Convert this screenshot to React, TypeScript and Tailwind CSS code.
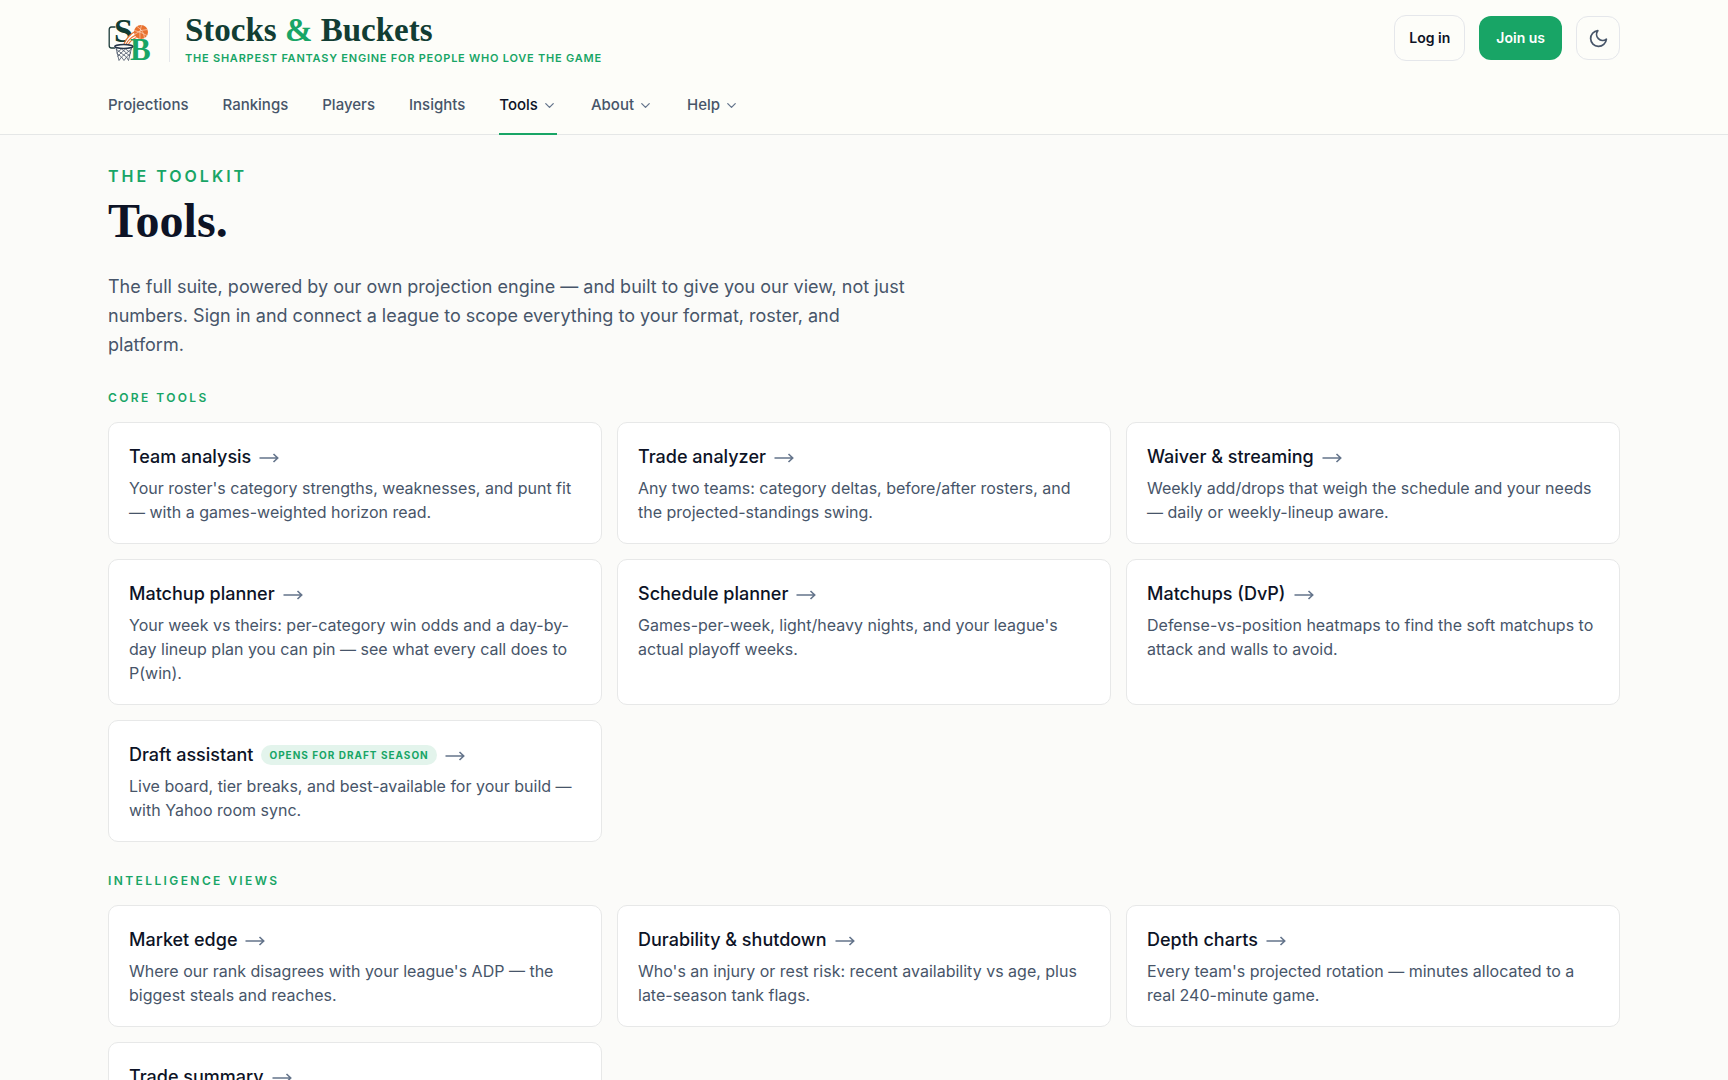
import { ChevronDown } from 'lucide-react';

interface Tool {
  title: string;
  description: string;
  badge?: string;
}

interface NavItem {
  label: string;
  active?: boolean;
  hasMenu?: boolean;
}

const navItems: NavItem[] = [
  { label: 'Projections' },
  { label: 'Rankings' },
  { label: 'Players' },
  { label: 'Insights' },
  { label: 'Tools', active: true, hasMenu: true },
  { label: 'About', hasMenu: true },
  { label: 'Help', hasMenu: true },
];

const coreTools: Tool[] = [
  {
    title: 'Team analysis',
    description: "Your roster's category strengths, weaknesses, and punt fit — with a games-weighted horizon read.",
  },
  {
    title: 'Trade analyzer',
    description: 'Any two teams: category deltas, before/after rosters, and the projected-standings swing.',
  },
  {
    title: 'Waiver & streaming',
    description: 'Weekly add/drops that weigh the schedule and your needs — daily or weekly-lineup aware.',
  },
  {
    title: 'Matchup planner',
    description:
      'Your week vs theirs: per-category win odds and a day-by-day lineup plan you can pin — see what every call does to P(win).',
  },
  {
    title: 'Schedule planner',
    description: "Games-per-week, light/heavy nights, and your league's actual playoff weeks.",
  },
  {
    title: 'Matchups (DvP)',
    description: 'Defense-vs-position heatmaps to find the soft matchups to attack and walls to avoid.',
  },
  {
    title: 'Draft assistant',
    badge: 'Opens for draft season',
    description: 'Live board, tier breaks, and best-available for your build — with Yahoo room sync.',
  },
];

const intelligenceViews: Tool[] = [
  {
    title: 'Market edge',
    description: "Where our rank disagrees with your league's ADP — the biggest steals and reaches.",
  },
  {
    title: 'Durability & shutdown',
    description: "Who's an injury or rest risk: recent availability vs age, plus late-season tank flags.",
  },
  {
    title: 'Depth charts',
    description: "Every team's projected rotation — minutes allocated to a real 240-minute game.",
  },
  {
    title: 'Trade summary',
    description: 'Every completed trade in your league, graded by value gained and given up.',
  },
];

function Logo() {
  return (
    <svg viewBox="0 0 44 44" className="size-11 shrink-0 overflow-visible" aria-hidden="true">
      {/* Backboard */}
      <path d="M7.5 9H3.5Q1.2 9 1.2 11.5V27.5Q1.2 30 3.5 30H7" fill="none" stroke="#1c3b3a" strokeWidth="1.3" />
      <text x="6" y="23.5" fontSize="34" fontWeight="700" fill="#123d33" className="font-['Liberation_Serif',serif]">
        S
      </text>
      {/* Ball and trail */}
      <path d="M16 27Q19 19 27 13L30 19Q23 20 19 27Z" fill="#fdfdf9" />
      <path
        d="M16 26Q19 18 27 13.5M18 26.5Q21 20 28 17M20 27Q23 21.5 28.5 19.5"
        fill="none"
        stroke="#e8712f"
        strokeWidth="1.1"
      />
      <circle cx="33" cy="14" r="7" fill="#e8712f" />
      <path
        d="M26.5 16.5Q33 11 39.5 11.5M29 8.5Q36 13 36.5 20M33.5 7.3Q31 14 32 20.8M26.5 12.5Q33 14 39 17.5"
        fill="none"
        stroke="#fde3d0"
        strokeWidth="0.6"
      />
      <text x="22" y="42" fontSize="31" fontWeight="700" fill="#18a566" className="font-['Liberation_Serif',serif]">
        B
      </text>
      {/* Hoop and net */}
      <path d="M6.5 29L10.5 42.5H20.5L25 29Z" fill="#fdfdf9" />
      <path
        d="M8 30L11 42.5L13.5 39L16 42.5L18.5 39L20.5 42.5L23.5 30M8 31L13 35L17.5 31L23 35M23.5 31L18.5 35L13.5 31L8.5 35M9 35.5L13.5 39L18 35L22 38M22.5 35.5L18.5 39L13 35L9.5 38.5"
        fill="none"
        stroke="#4a5568"
        strokeWidth="0.8"
      />
      <ellipse cx="15.8" cy="28.5" rx="9" ry="1.9" fill="#fdfdf9" stroke="#27364a" strokeWidth="1.5" />
    </svg>
  );
}

function MoonIcon() {
  return (
    <svg
      viewBox="0 0 24 24"
      className="size-[21px]"
      fill="none"
      stroke="currentColor"
      strokeWidth="2"
      strokeLinecap="round"
      strokeLinejoin="round"
      aria-hidden="true"
    >
      <path d="M21 12.8A9 9 0 1 1 11.2 3 7 7 0 0 0 21 12.8Z" />
    </svg>
  );
}

function Header() {
  return (
    <header className="border-b border-[#e5e7e7] bg-[#fdfdf9]">
      <div className="mx-auto max-w-[1560px] px-6 pt-[15px]">
        <div className="flex items-start justify-between">
          <a href="#" className="flex items-center">
            <Logo />
            <span className="mr-[15px] ml-[17px] h-11 w-px bg-[#e5e7eb]" />
            <span className="flex flex-col">
              <span className="font-['Liberation_Serif',serif] text-[33px] leading-[30px] font-bold text-[#123d33]">
                Stocks <span className="text-[#18a566]">&amp;</span> Buckets
              </span>
              <span className="mt-[7px] text-[11px] leading-3 font-semibold tracking-[0.07em] text-[#18a566] uppercase">
                The sharpest fantasy engine for people who love the game
              </span>
            </span>
          </a>
          <div className="flex items-center gap-[14px]">
            <button className="h-[46px] rounded-xl border border-[#e5e7eb] px-[14px] text-sm font-semibold text-[#0d1326]">
              Log in
            </button>
            <button className="h-11 rounded-xl bg-[#18a566] px-[17px] text-sm font-semibold text-white">
              Join us
            </button>
            <button
              aria-label="Toggle dark mode"
              className="flex size-11 items-center justify-center rounded-xl border border-[#e5e7eb] text-[#475569]"
            >
              <MoonIcon />
            </button>
          </div>
        </div>

        <nav className="mt-[13px] flex gap-[34px]">
          {navItems.map((item) => (
            <a
              key={item.label}
              href="#"
              className={`-mb-px flex items-center gap-1 border-b-2 py-4 text-[15px] leading-6 font-medium ${
                item.active ? 'border-[#18a566] text-[#0d1326]' : 'border-transparent text-[#475569]'
              }`}
            >
              {item.label}
              {item.hasMenu && <ChevronDown size={15} className="text-[#64748b]" />}
            </a>
          ))}
        </nav>
      </div>
    </header>
  );
}

function ToolCard({ title, description, badge }: Tool) {
  return (
    <a href="#" className="block rounded-[10px] border border-[#e7e8e8] bg-white px-5 pt-5 pb-[19px]">
      <h3 className="flex items-center gap-2 text-lg leading-7 font-medium text-[#0d1326]">
        {title}
        {badge && (
          <span className="rounded-full bg-[#e3f4ec] px-2 text-[10px] leading-5 font-bold tracking-[0.1em] text-[#18a566] uppercase">
            {badge}
          </span>
        )}
        <svg viewBox="0 0 20 12" className="mt-[2px] h-3 w-5" fill="none" stroke="#64748b" strokeWidth="1.6" aria-hidden="true">
          <path d="M0.5 6H18.5M14.5 2L18.7 6L14.5 10" />
        </svg>
      </h3>
      <p className="mt-[5px] text-base leading-6 text-[#475569]">{description}</p>
    </a>
  );
}

function ToolSection({ heading, tools }: { heading: string; tools: Tool[] }) {
  return (
    <section className="mt-[29px]">
      <h2 className="text-xs leading-5 font-semibold tracking-[0.2em] text-[#18a566] uppercase">{heading}</h2>
      <div className="mt-[14px] grid gap-[15px] lg:grid-cols-3">
        {tools.map((tool) => (
          <ToolCard key={tool.title} {...tool} />
        ))}
      </div>
    </section>
  );
}

export default function App() {
  return (
    <div className="min-h-screen bg-[#fbfbf9] font-['Inter',sans-serif]">
      <Header />
      <main className="mx-auto max-w-[1560px] px-6 pt-[29px] pb-16">
        <p className="text-base leading-6 font-semibold tracking-[3px] text-[#18a566] uppercase">The toolkit</p>
        <h1 className="mt-2 font-['Liberation_Serif',serif] text-5xl leading-[50px] font-bold text-[#0d1326]">
          Tools.
        </h1>
        <p className="mt-[26px] max-w-[808px] text-lg leading-[29px] text-[#475569]">
          The full suite, powered by our own projection engine — and built to give you our view, not just numbers. Sign
          in and connect a league to scope everything to your format, roster, and platform.
        </p>
        <ToolSection heading="Core tools" tools={coreTools} />
        <ToolSection heading="Intelligence views" tools={intelligenceViews} />
      </main>
    </div>
  );
}
